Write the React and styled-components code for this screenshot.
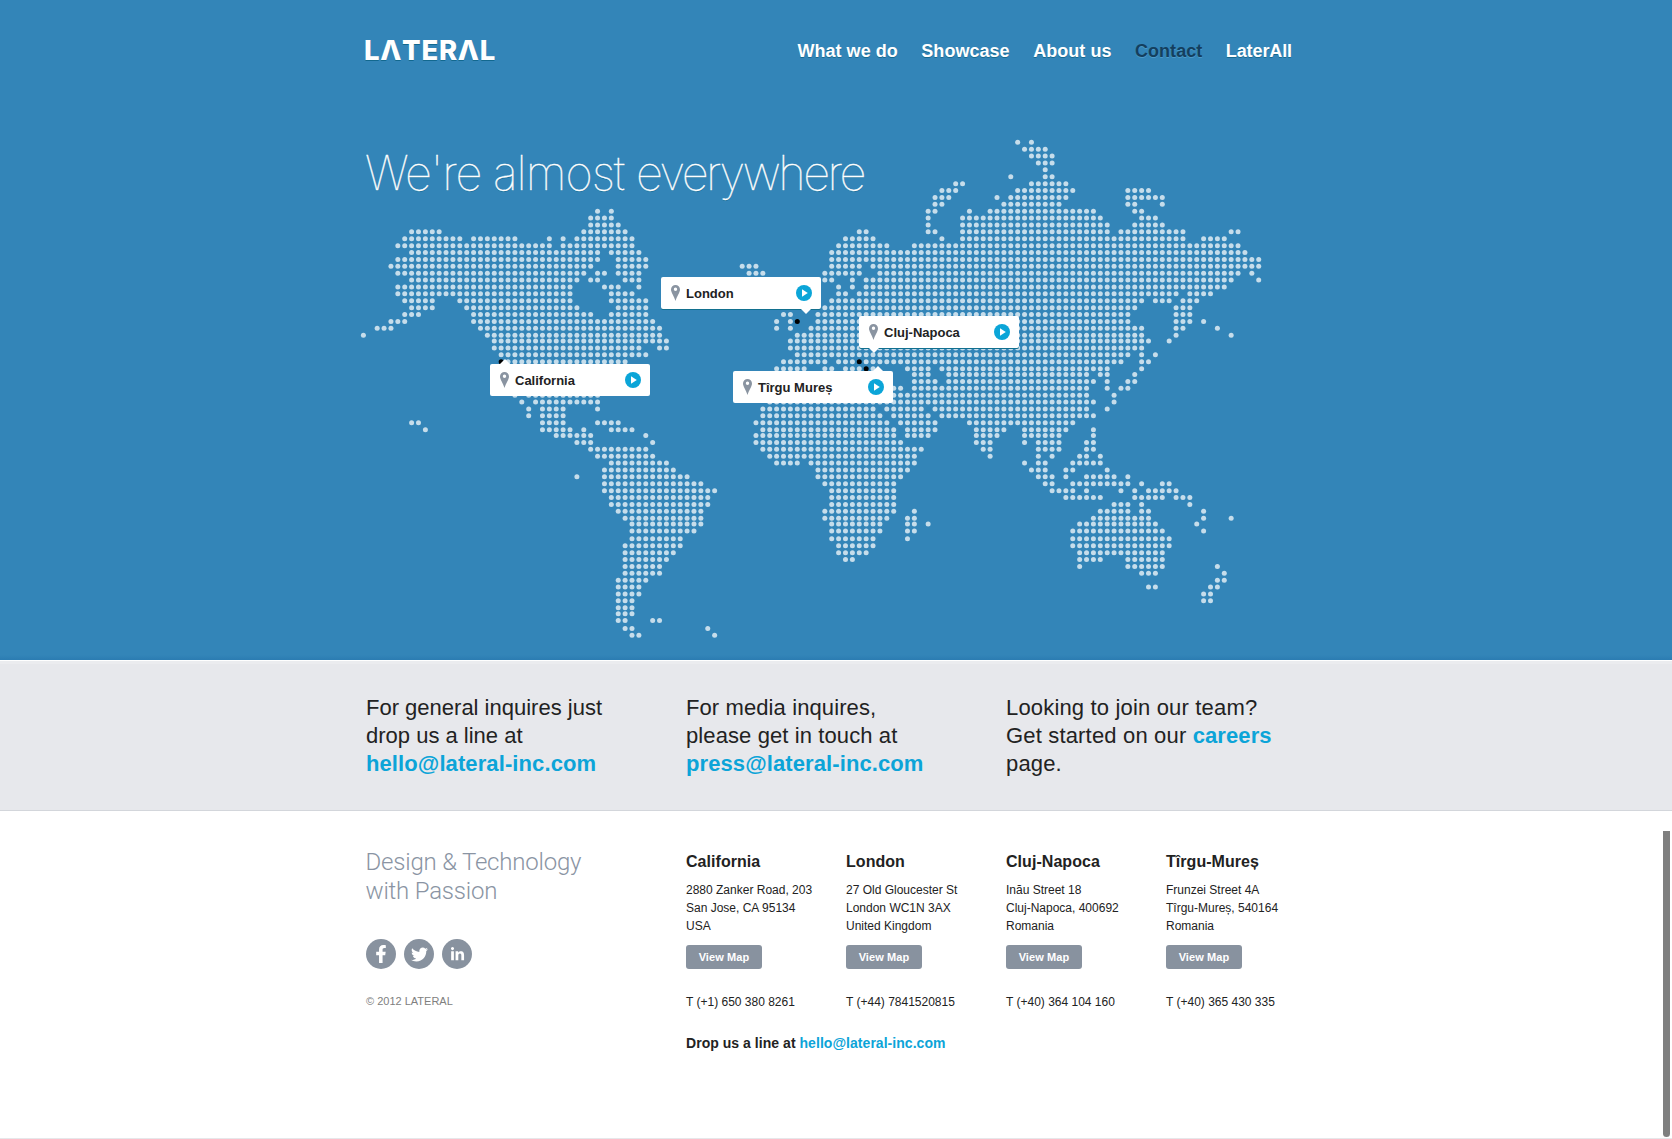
import React from "react";
import styled, { createGlobalStyle, css } from "styled-components";
import { FaFacebookF, FaTwitter, FaLinkedinIn } from "react-icons/fa";

const GlobalStyle = createGlobalStyle`
  * { box-sizing: border-box; }
  body {
    margin: 0;
    background: #fff;
    color: #222;
    font-family: "Liberation Sans", Arial, Helvetica, sans-serif;
    overflow: hidden;
  }
  a { text-decoration: none; }
`;

const Page = styled.div`
  position: relative;
  height: 1139px;
  display: flex;
  flex-direction: column;
  border-bottom: 1px solid #e6e7ea;
`;

const Container = styled.div`
  width: 940px;
  margin: 0 auto;
  padding-right: 10px;
`;

const Hero = styled.section`
  height: 660px;
  flex: none;
  background: linear-gradient(to bottom, #3385b8 0, #3385b8 655px, #2b7cb2 660px);
`;

const HeroInner = styled(Container)`
  position: relative;
  height: 100%;
`;

const Header = styled.header`
  position: relative;
  z-index: 1;
  display: flex;
  justify-content: space-between;
  align-items: flex-start;
  padding: 36px 4px 0 0;
  height: 143px;
`;

const Logo = styled.a`
  margin-left: -2px;
  font: 800 27.5px/28px Inter, sans-serif;
  letter-spacing: 0.7px;
  color: #fff;
  text-shadow: 0 1px 0 #12688f;
`;

const Nav = styled.nav`
  display: flex;
  gap: 23.500px;
  padding-top: 5px;
`;

const NavLink = styled.a`
  font-size: 18px;
  line-height: 21px;
  letter-spacing: 0.04px;
  font-weight: bold;
  color: ${(p) => (p.$active ? "#143f5e" : "#fff")};
  text-shadow: 0 1px 0 ${(p) => (p.$active ? "#4d9bc9" : "#17698f")};

  &:last-child { letter-spacing: -0.1px; }
`;

const Title = styled.h1`
  position: relative;
  z-index: 1;
  margin: 0 0 0 -1px;
  font: 100 47px/60px Inter, sans-serif;
  letter-spacing: -1.3px;
  white-space: nowrap;
  color: #fff;
  -webkit-text-stroke: 0.35px #fff;
  text-shadow: 0 1px 0 rgba(18, 104, 143, 0.7);
`;

const TitleWord = styled.span`
  letter-spacing: ${(p) => p.$tracking}px;
`;

const MapCanvas = styled.div`
  position: absolute;
  left: -10px;
  top: 0;
  width: 960px;
  height: 660px;
`;

const Marker = styled.a`
  position: absolute;
  left: ${(p) => p.$x}px;
  top: ${(p) => p.$y}px;
  width: 160px;
  height: 32px;
  padding: 0 9px 0 10px;
  display: flex;
  align-items: center;
  background: #fff;
  border-radius: 2px;
  box-shadow: ${(p) => (p.$up ? "none" : "0 1px 0 #12708f")};
  color: #222;
  font-size: 13px;
  font-weight: bold;

  &::after {
    content: "";
    position: absolute;
    left: ${(p) => p.$tip - 6}px;
    border: 6px solid transparent;
    ${(p) =>
      p.$up
        ? css`border-top: 0; border-bottom: 6px solid #fff; top: -5px;`
        : css`border-bottom: 0; border-top: 6px solid #fff; bottom: -5px;`}
  }
`;

const MarkerName = styled.span`
  flex: 1;
  margin-left: 6px;
  padding-top: 2px;
  line-height: 30px;
`;

const Inquiries = styled.section`
  height: 151px;
  flex: none;
  background: #e7e8ec;
  border-top: 1px solid #fff;
  border-bottom: 1px solid #d3d6db;
  box-shadow: inset 0 3px 0 #ebecef;
`;

const InquiryGrid = styled(Container)`
  display: grid;
  grid-template-columns: repeat(3, 320px);
  padding-top: 33px;
`;

const Inquiry = styled.p`
  margin: 0;
  font-size: 22px;
  line-height: 28px;
  letter-spacing: ${(p) => p.$tracking || 0}px;
  color: #222;
  white-space: nowrap;
`;

const StrongLink = styled.a`
  font-weight: bold;
  letter-spacing: 0.1px;
  color: #0ca4d8;
`;

const Footer = styled.footer`
  flex: 1;
`;

const FooterGrid = styled(Container)`
  display: grid;
  grid-template-columns: 320px 1fr;
  padding-top: 37px;
`;

const Tagline = styled.h2`
  margin: 0 0 0 -0.5px;
  font: 300 24px/29px Roboto, sans-serif;
  letter-spacing: -0.2px;
  color: #8a94a3;
`;

const Social = styled.div`
  display: flex;
  gap: 8px;
  margin-top: 33px;
`;

const SocialLink = styled.a`
  width: 30px;
  height: 30px;
  border-radius: 50%;
  display: flex;
  align-items: center;
  justify-content: center;
  background: #88929f;
  color: #fff;
`;

const Copyright = styled.p`
  margin: 25px 0 0;
  font-size: 11px;
  line-height: 14px;
  color: #808080;
`;

const Offices = styled.div`
  display: grid;
  grid-template-columns: repeat(4, 160px);
`;

const OfficeName = styled.h3`
  margin: 4px 0 9px;
  font-size: 16px;
  line-height: 20px;
  letter-spacing: 0.05px;
`;

const Address = styled.p`
  margin: 0;
  font-size: 12px;
  line-height: 18px;
  white-space: nowrap;
`;

const MapButton = styled.a`
  display: block;
  width: 76px;
  margin: 10px 0 24px;
  border-radius: 3px;
  background: #88929f;
  color: #fff;
  font-size: 11px;
  font-weight: bold;
  letter-spacing: 0.1px;
  line-height: 24px;
  text-align: center;
`;

const DropLine = styled.p`
  margin: 22px 0 0;
  font-size: 14px;
  line-height: 20px;
  font-weight: bold;
  letter-spacing: 0.04px;

  ${StrongLink} { letter-spacing: 0.04px; }
`;

const ScrollThumb = styled.div`
  position: absolute;
  right: 2px;
  top: 831px;
  width: 7px;
  height: 306px;
  border-radius: 0 0 4px 4px;
  background: #7f7f7f;
`;

/* Filled columns of every map row, from the top row down. */
const MAP_ROWS = [
  "95 97",
  "96-99",
  "97-100",
  "98-100",
  "99",
  "94 99-100",
  "86-87 97-102",
  "84-86 95-103 111-114",
  "83-85 92 94-102 111-116",
  "83-84 93-101 111-112 116",
  "34 36 82-83 88 91-106 112-113",
  "33-36 82 87-107 113-115",
  "33-37 82 87-108 112-116",
  "7-11 32-38 72-73 82-83 87-108 110-119 126-127",
  "6-14 16-22 27 29 31-39 70-74 84 87-119 122-125",
  "5-27 29-39 69-76 80-127",
  "7-34 36-40 68-128",
  "5-34 37-41 68-130",
  "4-33 37-41 55-57 68-72 74-130",
  "5-32 34-35 37-40 56-58 67-72 75-127 129",
  "7-31 33-34 38-40 67-68 71 73-126 130",
  "5-30 35-37 40 69 71 73-125",
  "5-30 36-39 69-70 72-118 120-123",
  "6-10 14-30 36-41 68-113 115-117 119-121",
  "7-10 15-31 37-41 67-112 118-120",
  "6-8 16-33 36-41 61-62 66-111 118-120",
  "4-6 16-42 60 62 66-111 118-120 122",
  "2-4 17-43 60 62 65-113 118-119 124",
  "0 18-43 63-113 118 126",
  "19-44 62-114 117",
  "19-40 43-44 62-113",
  "20-41 63-111 113 115",
  "21-38 61-67 69-71 73-110 113-114",
  "21-38 60-64 67-68 70-72 74 79-82 84-108 113",
  "80-82 85-105 107-108 112",
  "80-83 85-106 108 111-112",
  "77-78 80-105 108 110-111",
  "22 24-34 77-105 109",
  "23 25-34 59-106 109",
  "24 26-29 34 58-74 76-81 83-105 108",
  "24 26-29 58-75 77-82 84-106",
  "7-8 26-29 34-37 57-76 78-83 88-103",
  "9 26-30 32 36-39 58-77 79-83 89-93 96-102 106",
  "28-33 41 57-77 79-82 89-92 96-101 106",
  "31-33 42 57-78 89-91 96 98-101 105-106",
  "33-41 58-81 90-91 98-101 105-106",
  "34-42 59-80 91 98 100 104-105 107",
  "36-44 60-63 65-80 96 98-99 103-107",
  "35-45 66-79 97-99 102-103 108",
  "31 35-47 66-78 98-100 102 105-109 111",
  "35-49 67-77 99-100 103-111 113 116-117",
  "35-51 68-77 100-103 105 110 112 114-118",
  "36-50 68-77 102-107 112-116 118-120",
  "36-50 68-77 109-111 113 120",
  "37-49 67-77 80 107-111 113-114 122",
  "38-49 67-76 79-80 106-114 122 126",
  "39-49 68-75 79-80 82 104-115 121",
  "39-48 68-75 79-80 103-116 122",
  "39-46 68-74 79 103-117",
  "38-46 69-74 103-117",
  "38-45 69-73 104-116",
  "38-44 70-71 104-107 111-116",
  "38-43 104 111-116 124",
  "38-43 113-115 125",
  "37-41 124-125",
  "37-40 114-115 123-124",
  "37-40 122-123",
  "37-39 122-123",
  "37-39",
  "37-39",
  "37-38 42-43",
  "38-39 50",
  "39-40 51",
];

const CITY_DOTS = [
  [20, 32],
  [63, 26],
  [72, 32],
  [73, 33],
];

/* Rows where the grid is one pixel tighter or looser than the pitch. */
const ROW_SHIFTS = [[29, -1], [34, -1], [43, -1], [56, -1], [58, 1], [69, -1], [71, 1]];

const dotX = (col) => 7.4 + col * 6.887;
const dotY = (row) =>
  142.3 + row * 6.889 + ROW_SHIFTS.reduce((sum, [from, d]) => (row >= from ? sum + d : sum), 0);

const expand = (row) =>
  row.split(" ").flatMap((part) => {
    const [from, to = from] = part.split("-").map(Number);
    return Array.from({ length: to - from + 1 }, (_, i) => from + i);
  });

function WorldMap() {
  return (
    <svg width="960" height="660" viewBox="0 0 960 660" aria-hidden="true">
      <g fill="#c6ddeb">
        {MAP_ROWS.flatMap((row, r) =>
          expand(row).map((c) => <circle key={`${r}-${c}`} cx={dotX(c)} cy={dotY(r)} r="2.5" />)
        )}
      </g>
      {CITY_DOTS.map(([c, r]) => (
        <circle key={`${c}-${r}`} cx={dotX(c)} cy={dotY(r)} r="2.5" fill="#000" />
      ))}
    </svg>
  );
}

const PinIcon = () => (
  <svg width="9" height="16" viewBox="0 0 9 16">
    <path
      fill="#8a94a1"
      fillRule="evenodd"
      d="M4.500 0A4.500 4.500 0 0 0 0 4.500C0 7.500 3 11 4.500 16C6 11 9 7.500 9 4.500A4.500 4.500 0 0 0 4.500 0ZM4.500 2.500A1.700 1.700 0 1 1 4.500 5.900A1.700 1.700 0 1 1 4.500 2.500Z"
    />
  </svg>
);

const PlayIcon = () => (
  <svg width="16" height="16" viewBox="0 0 16 16">
    <circle cx="8" cy="8" r="8" fill="#0ba5d8" />
    <path fill="#fff" d="M6 4.300L11.800 8L6 11.700Z" />
  </svg>
);

const MARKERS = [
  { name: "London", x: 305, y: 277, tip: 145 },
  { name: "Cluj-Napoca", x: 503, y: 316, tip: 15 },
  { name: "Tîrgu Mureș", x: 377, y: 371, tip: 145, up: true },
  { name: "California", x: 134, y: 364, tip: 15, up: true },
];

const NAV = ["What we do", "Showcase", "About us", "Contact", "LaterAll"];

const OFFICES = [
  { name: "California", lines: ["2880 Zanker Road, 203", "San Jose, CA 95134", "USA"], phone: "T (+1) 650 380 8261" },
  { name: "London", lines: ["27 Old Gloucester St", "London WC1N 3AX", "United Kingdom"], phone: "T (+44) 7841520815" },
  { name: "Cluj-Napoca", lines: ["Inău Street 18", "Cluj-Napoca, 400692", "Romania"], phone: "T (+40) 364 104 160" },
  { name: "Tîrgu-Mureș", lines: ["Frunzei Street 4A", "Tîrgu-Mureș, 540164", "Romania"], phone: "T (+40) 365 430 335" },
];

export default function App() {
  return (
    <Page>
      <GlobalStyle />
      <Hero>
        <HeroInner>
          <MapCanvas>
            <WorldMap />
            {MARKERS.map((m) => (
              <Marker key={m.name} $x={m.x} $y={m.y} $tip={m.tip} $up={m.up}>
                <PinIcon />
                <MarkerName>{m.name}</MarkerName>
                <PlayIcon />
              </Marker>
            ))}
          </MapCanvas>
          <Header>
            <Logo aria-label="LATERAL">LΛTERΛL</Logo>
            <Nav>
              {NAV.map((item) => (
                <NavLink key={item} $active={item === "Contact"}>{item}</NavLink>
              ))}
            </Nav>
          </Header>
          <Title>
            <TitleWord $tracking={-1.3}>We're</TitleWord>{" "}
            <TitleWord $tracking={-1}>almost</TitleWord>{" "}
            <TitleWord $tracking={-2.5}>everywhere</TitleWord>
          </Title>
        </HeroInner>
      </Hero>

      <Inquiries>
        <InquiryGrid>
          <Inquiry>
            For general inquires just<br />drop us a line at<br />
            <StrongLink>hello@lateral-inc.com</StrongLink>
          </Inquiry>
          <Inquiry $tracking={0.1}>
            For media inquires,<br />please get in touch at<br />
            <StrongLink>press@lateral-inc.com</StrongLink>
          </Inquiry>
          <Inquiry $tracking={0.17}>
            Looking to join our team?<br />Get started on our <StrongLink>careers</StrongLink><br />page.
          </Inquiry>
        </InquiryGrid>
      </Inquiries>

      <Footer>
        <FooterGrid>
          <div>
            <Tagline>Design &amp; Technology<br />with Passion</Tagline>
            <Social>
              <SocialLink aria-label="Facebook"><FaFacebookF size={18} /></SocialLink>
              <SocialLink aria-label="Twitter"><FaTwitter size={17} /></SocialLink>
              <SocialLink aria-label="LinkedIn"><FaLinkedinIn size={15} /></SocialLink>
            </Social>
            <Copyright>© 2012 LATERAL</Copyright>
          </div>
          <div>
            <Offices>
              {OFFICES.map((o) => (
                <div key={o.name}>
                  <OfficeName>{o.name}</OfficeName>
                  {o.lines.map((line) => <Address key={line}>{line}</Address>)}
                  <MapButton>View Map</MapButton>
                  <Address>{o.phone}</Address>
                </div>
              ))}
            </Offices>
            <DropLine>
              Drop us a line at <StrongLink>hello@lateral-inc.com</StrongLink>
            </DropLine>
          </div>
        </FooterGrid>
      </Footer>
      <ScrollThumb />
    </Page>
  );
}
